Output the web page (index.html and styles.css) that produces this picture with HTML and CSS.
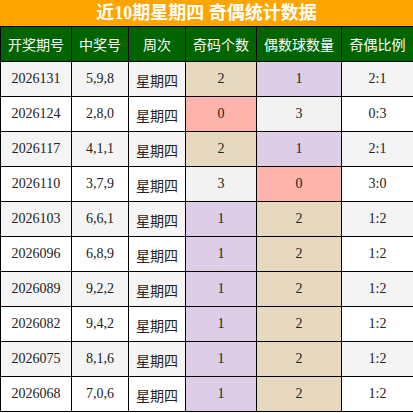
FILE: index.html
```html
<!DOCTYPE html>
<html lang="zh">
<head>
<meta charset="utf-8">
<link rel="stylesheet" href="styles.css">
</head>
<body>
<div class="wrap">
  <div class="title">近10期星期四 奇偶统计数据</div>
  <table class="tbl">
    <colgroup>
      <col class="c1"><col class="c2"><col class="c3"><col class="c4"><col class="c5"><col class="c6">
    </colgroup>
    <thead>
      <tr><th>开奖期号</th><th>中奖号</th><th>周次</th><th>奇码个数</th><th>偶数球数量</th><th>奇偶比例</th></tr>
    </thead>
    <tbody>
      <tr class="alt"><td>2026131</td><td>5,9,8</td><td class="cjk">星期四</td><td class="tan">2</td><td class="lav">1</td><td>2:1</td></tr>
      <tr><td>2026124</td><td>2,8,0</td><td class="cjk">星期四</td><td class="pink">0</td><td class="gray">3</td><td>0:3</td></tr>
      <tr class="alt"><td>2026117</td><td>4,1,1</td><td class="cjk">星期四</td><td class="tan">2</td><td class="lav">1</td><td>2:1</td></tr>
      <tr><td>2026110</td><td>3,7,9</td><td class="cjk">星期四</td><td class="gray">3</td><td class="pink">0</td><td>3:0</td></tr>
      <tr class="alt"><td>2026103</td><td>6,6,1</td><td class="cjk">星期四</td><td class="lav">1</td><td class="tan">2</td><td>1:2</td></tr>
      <tr><td>2026096</td><td>6,8,9</td><td class="cjk">星期四</td><td class="lav">1</td><td class="tan">2</td><td>1:2</td></tr>
      <tr class="alt"><td>2026089</td><td>9,2,2</td><td class="cjk">星期四</td><td class="lav">1</td><td class="tan">2</td><td>1:2</td></tr>
      <tr><td>2026082</td><td>9,4,2</td><td class="cjk">星期四</td><td class="lav">1</td><td class="tan">2</td><td>1:2</td></tr>
      <tr class="alt"><td>2026075</td><td>8,1,6</td><td class="cjk">星期四</td><td class="lav">1</td><td class="tan">2</td><td>1:2</td></tr>
      <tr><td>2026068</td><td>7,0,6</td><td class="cjk">星期四</td><td class="lav">1</td><td class="tan">2</td><td>1:2</td></tr>
    </tbody>
  </table>
</div>
</body>
</html>
```
FILE: styles.css
```css
html, body {
  margin: 0;
  padding: 0;
  background: #ffffff;
}
.wrap {
  width: 413px;
}
.title {
  height: 26px;
  line-height: 26px;
  background: #ffa500;
  color: #ffffff;
  font-family: "Liberation Serif", "Noto Sans CJK SC", sans-serif;
  font-weight: bold;
  font-size: 18px;
  text-align: center;
}
.tbl {
  width: 413px;
  border-collapse: collapse;
  table-layout: fixed;
  font-family: "Liberation Serif", "Noto Sans CJK SC", serif;
  font-size: 14px;
  color: #222222;
}
.c1 { width: 71px; }
.c2 { width: 57px; }
.c3 { width: 57px; }
.c4 { width: 71px; }
.c5 { width: 85px; }
.c6 { width: 72px; }
.tbl th, .tbl td {
  border: 1px solid #000000;
  height: 35px;
  padding: 0;
  text-align: center;
  vertical-align: middle;
  box-sizing: border-box;
}
.tbl th {
  background: #006400;
  color: #ffffff;
  font-weight: normal;
  font-family: "Noto Sans CJK SC", sans-serif;
  font-size: 14px;
}
.tbl tr.alt td { background: #f4f4f4; }
.tbl td.cjk { font-family: "Noto Sans CJK SC", sans-serif; padding-top: 2px; }
.tbl tr td.tan { background: #e6d9bf; }
.tbl tr td.lav { background: #ddcde6; }
.tbl tr td.pink { background: #ffb4ab; }
.tbl tr td.gray { background: #f2f2f2; }
```
